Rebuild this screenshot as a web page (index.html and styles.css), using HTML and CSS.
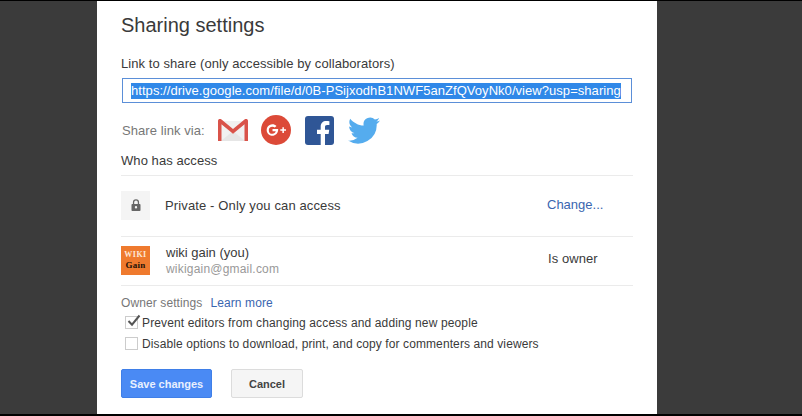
FILE: index.html
```html
<!DOCTYPE html>
<html lang="en">
<head>
<meta charset="utf-8">
<title>Sharing settings</title>
<link rel="stylesheet" href="styles.css">
</head>
<body>
<main class="dialog">
  <h1 class="title">Sharing settings</h1>
  <div class="label">Link to share (only accessible by collaborators)</div>
  <div class="link-box"><span class="selected">https://drive.google.com/file/d/0B-PSijxodhB1NWF5anZfQVoyNk0/view?usp=sharing</span></div>
  <div class="share-row">
    <span class="share-label">Share link via:</span>
    <svg class="ic-gmail" width="32" height="26" viewBox="0 0 32 26">
      <path d="M2 4h28v20H2z" fill="#f1f1f1"/>
      <path d="M4 24 16 14l12 10z" fill="#e6e6e6"/>
      <path d="M5 4 16 13 27 4v3.500L16 17 5 7.500z" fill="#e9a49c"/>
      <path d="M1 24V4C1 2 3 1.500 4.500 2.500L16 12 27.500 2.500C29 1.500 31 2 31 4v20h-3.500V7.200L16 16.500 4.500 7.200V24z" fill="#d9534a"/>
    </svg>
    <svg class="ic-gplus" width="30" height="30" viewBox="0 0 30 30">
      <circle cx="15" cy="15" r="15" fill="#dc4a38"/>
      <path transform="translate(-2.400 -3) scale(1.200)" d="M11.500 10.200a4.800 4.800 0 1 0 3.400 8.200c1.200-1.300 1.500-2.800 1.400-4.200h-4.700v1.900h2.700c-.3 1.200-1.300 2.100-2.800 2.100a3 3 0 0 1 0-6c.8 0 1.500.3 2 .8l1.400-1.400c-.9-.9-2.100-1.400-3.400-1.400z" fill="#fff"/>
      <path d="M21.400 12.200h1.500v2.100H25v1.500h-2.100v2.100h-1.500v-2.100h-2.100v-1.500h2.100z" fill="#fff"/>
    </svg>
    <svg class="ic-fb" width="29" height="29" viewBox="0 0 29 29">
      <rect width="29" height="29" rx="3" fill="#2f5696"/>
      <path d="M20 29V18h3.600l.6-4.300H20v-2.500c0-1.300.4-2.100 2.200-2.100h2.200V5.200c-.4 0-1.700-.2-3.200-.2-3.200 0-5.500 2-5.500 5.600v3.100H12V18h3.700v11z" fill="#fff"/>
    </svg>
    <svg class="ic-tw" width="32" height="27" viewBox="0 0 32 26">
      <path d="M32 3.100c-1.200.5-2.400.9-3.800 1 1.400-.8 2.400-2.100 2.900-3.600-1.300.8-2.700 1.300-4.200 1.600A6.600 6.600 0 0 0 15.700 8.100C10.300 7.800 5.500 5.200 2.200 1.200.5 4.200 1.300 8 4.200 9.900c-1.100 0-2.100-.3-3-.8 0 3.100 2.200 5.900 5.300 6.500-1 .3-2 .3-3 .1.800 2.600 3.200 4.500 6.100 4.600A13.200 13.200 0 0 1 0 23.100 18.600 18.600 0 0 0 28.700 6.600C30 5.700 31.100 4.500 32 3.100z" fill="#55acee"/>
    </svg>
  </div>
  <div class="label access-title">Who has access</div>
  <div class="person first">
    <div class="lock-tile">
      <svg width="10" height="12" viewBox="0 0 10 12"><path d="M1.900 5V3.300a3.100 3.100 0 0 1 6.200 0V5h.6c.4 0 .8.300.8.800v5.400c0 .5-.4.800-.8.800H1.300c-.4 0-.8-.3-.8-.8V5.800c0-.5.4-.8.800-.8zm1.300 0h3.600V3.300a1.800 1.800 0 0 0-3.600 0zM5 7a1.200 1.200 0 1 0 0 2.400A1.200 1.200 0 0 0 5 7z" fill="#666" fill-rule="evenodd"/></svg>
    </div>
    <div class="who private">Private - Only you can access</div>
    <a class="link role change">Change...</a>
  </div>
  <div class="person second">
    <div class="avatar"><span class="av-wiki">WIKI</span><span class="av-gain">Gain</span></div>
    <div class="who stacked">
      <div class="name">wiki gain (you)</div>
      <div class="email">wikigain@gmail.com</div>
    </div>
    <div class="role owner-role">Is owner</div>
  </div>
  <div class="owner"><span class="muted">Owner settings</span><a class="link learn">Learn more</a></div>
  <div class="check-row">
    <span class="box"><svg width="15" height="14" viewBox="0 0 15 14"><path d="M2.500 7 6 10.700 13.500 1.500" fill="none" stroke="#555" stroke-width="2"/></svg></span>
    <span>Prevent editors from changing access and adding new people</span>
  </div>
  <div class="check-row tight">
    <span class="box"></span>
    <span>Disable options to download, print, and copy for commenters and viewers</span>
  </div>
  <div class="buttons">
    <button class="btn primary">Save changes</button>
    <button class="btn">Cancel</button>
  </div>
</main>
</body>
</html>
```
FILE: styles.css
```css
* { box-sizing: border-box; }
html, body { margin: 0; height: 416px; overflow: hidden; }
body {
  background: #3b3b3b;
  border-top: 1px solid #000;
  border-bottom: 2px solid #000;
  font-family: "Liberation Sans", Arial, sans-serif;
  font-size: 13px;
  color: #3a3a3a;
  letter-spacing: .07px;
}
.dialog {
  width: 560px;
  height: 413px;
  margin-left: 97px;
  background: #fff;
  padding: 12px 24px 0;
}
.title {
  margin: 0;
  font-size: 20px;
  font-weight: 400;
  line-height: 24px;
  letter-spacing: 0;
  color: #3a3a3a;
}
.label { line-height: 16px; }
.title + .label { margin-top: 19px; }
.link-box {
  margin: 6px 0 0 1px;
  width: 510px;
  height: 25px;
  border: 1px solid #5b8fd8;
  padding: 4px 10px 0 8px;
  line-height: 16px;
  white-space: nowrap;
  overflow: hidden;
}
.selected { background: #3088e8; color: #fff; letter-spacing: .05px; display: inline-block; }
.share-row { display: flex; align-items: center; height: 32px; margin-top: 11px; }
.share-label { color: #777; width: 96px; padding-left: 1px; }
.ic-gplus { margin-left: 12px; }
.ic-fb { margin-left: 14px; }
.ic-tw { margin-left: 14px; }
.access-title { margin-top: 7px; }
.person { display: flex; align-items: center; border-top: 1px solid #ebebeb; }
.first { margin-top: 6px; height: 61px; padding-bottom: 2px; }
.second { height: 50px; padding-bottom: 2px; border-bottom: 1px solid #ebebeb; }
.lock-tile {
  width: 29px; height: 29px; background: #f4f4f4;
  display: flex; align-items: center; justify-content: center;
}
.avatar {
  width: 29px; height: 29px; background: #ef7a2e;
  display: flex; flex-direction: column; align-items: center; justify-content: center;
  font-family: "Liberation Serif", serif; font-weight: 700; line-height: 10px;
  letter-spacing: 0;
}
.av-wiki { color: #fde8d8; font-size: 8px; letter-spacing: .5px; }
.av-gain { color: #221208; font-size: 9px; letter-spacing: .2px; }
.who { margin-left: 15px; flex: 1; line-height: 16px; }
.private { letter-spacing: .13px; margin-top: 2px; }
.stacked { padding-top: 2px; margin-left: 16px; }
.name { letter-spacing: 0; }
.email { color: #999; font-size: 12px; letter-spacing: .2px; }
.role { width: 85px; }
.owner-role { margin-bottom: 4px; }
.link { color: #3a66b0; }
.change { letter-spacing: 0; margin-left: -1px; margin-bottom: 2px; width: 86px; }
.owner { margin-top: 9px; line-height: 16px; font-size: 12px; letter-spacing: .1px; }
.muted { color: #777; }
.learn { margin-left: 8px; }
.check-row { display: flex; align-items: center; height: 21px; font-size: 12px; margin-left: 4px; letter-spacing: .13px; }
.tight { letter-spacing: .1px; }
.owner + .check-row { margin-top: 1px; }
.box {
  width: 13px; height: 13px; border: 1px solid #ccc; margin-right: 4px;
  display: block; flex: none; position: relative;
}
.box svg { position: absolute; left: 0; top: -3px; }
.buttons { display: flex; gap: 19px; margin-top: 15px; }
.btn {
  height: 29px; width: 72px; border: 1px solid #dcdcdc; border-radius: 2px;
  background: #f5f5f5; color: #444; font: 700 11px "Liberation Sans", Arial, sans-serif;
  letter-spacing: 0; padding: 0;
}
.primary { width: 91px; background: #4a8af4; border-color: #3f7fe8; color: #e8f0fe; }
```
